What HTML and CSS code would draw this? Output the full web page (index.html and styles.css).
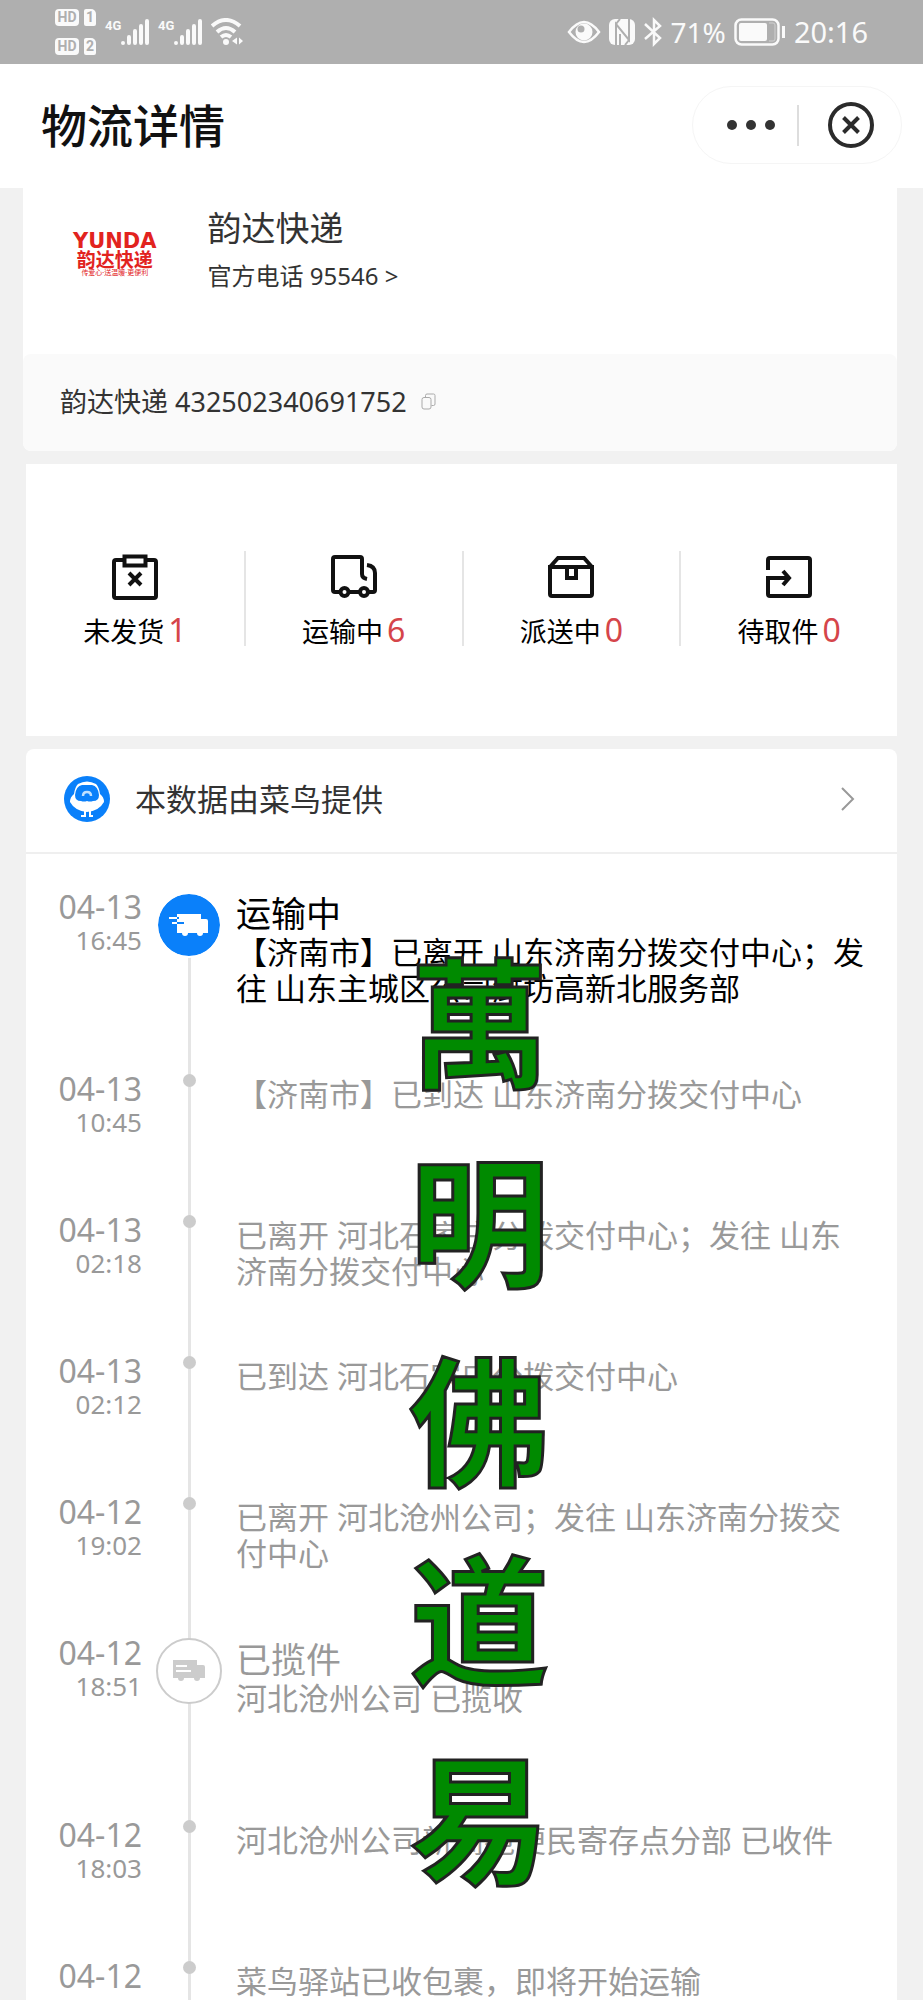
FILE: index.html
```html
<!DOCTYPE html>
<html lang="zh-CN">
<head>
    <meta charset="UTF-8">
    <meta name="viewport" content="width=device-width, initial-scale=1.0">
    <title>物流详情</title>
    <link rel="stylesheet" href="styles.css">
</head>
<body>
    <div class="status-bar">
        <div class="status-left">
            <div class="sim-list">
                <div class="sim"><span class="hd">HD</span><span class="sim-no">1</span></div>
                <div class="sim"><span class="hd">HD</span><span class="sim-no">2</span></div>
            </div>
            <div class="signal">
                <span class="net">4G</span>
                <svg width="28" height="26" viewBox="0 0 28 26"><path d="M2 24v0M8 18v6M14 12v12M20 7v17M26 2v22" stroke="#fafafa" stroke-width="4" stroke-linecap="round"/></svg>
            </div>
            <div class="signal">
                <span class="net">4G</span>
                <svg width="28" height="26" viewBox="0 0 28 26"><path d="M2 24v0M8 18v6M14 12v12M20 7v17M26 2v22" stroke="#fafafa" stroke-width="4" stroke-linecap="round"/></svg>
            </div>
            <svg width="33" height="28" viewBox="0 0 33 28" fill="none" stroke="#fafafa" stroke-width="4">
                <path d="M1 8q14-12 28 0M6 14q9-8 18 0M10 19q5-4 10 0"/>
                <circle cx="15" cy="24" r="3" fill="#fafafa" stroke="none"/>
                <path d="M26 19.500v7l-5-3.500zM28 19.500v7l4-3.500z" fill="#fafafa" stroke="none"/>
            </svg>
        </div>
        <div class="status-right">
            <svg width="34" height="24" viewBox="0 0 34 24">
                <path d="M2 12Q17-8 32 12Q17 32 2 12z" fill="none" stroke="#fafafa" stroke-width="2.500"/>
                <circle cx="17" cy="12" r="8.500" fill="#fafafa"/>
                <circle cx="14" cy="9" r="3.500" fill="#afafaf"/>
            </svg>
            <svg width="26" height="26" viewBox="0 0 26 26">
                <rect width="26" height="26" rx="6" fill="#fafafa"/>
                <path d="M7 26V5l13 16V0" fill="none" stroke="#afafaf" stroke-width="2"/>
                <path d="M7 5l4-5M20 21l-4 5M11 26V15" fill="none" stroke="#afafaf" stroke-width="2"/>
            </svg>
            <svg width="20" height="30" viewBox="0 0 20 30" fill="none" stroke="#fafafa" stroke-width="2.500"><path d="M2 7l15 14-6 6V3l6 6L2 22"/></svg>
            <span>71%</span>
            <svg width="52" height="28" viewBox="0 0 52 28">
                <rect x="1.500" y="1.500" width="43" height="25" rx="6" fill="none" stroke="#fafafa" stroke-width="2.500"/>
                <rect x="5" y="5" width="28" height="18" rx="2" fill="#fafafa"/>
                <path d="M35 5h4q2 0 2 2v14q0 2-2 2h-4" fill="none" stroke="#d0d0d0"/>
                <path d="M49.500 8v12" stroke="#fafafa" stroke-width="3"/>
            </svg>
            <span class="clock">20:16</span>
        </div>
    </div>

    <header class="title-bar">
        <h1>物流详情</h1>
        <div class="capsule">
            <button type="button" aria-label="更多">
                <svg width="50" height="12" viewBox="0 0 50 12" fill="#333"><circle cx="6" cy="6" r="5"/><circle cx="25" cy="6" r="5"/><circle cx="44" cy="6" r="5"/></svg>
            </button>
            <span class="capsule-line"></span>
            <button type="button" aria-label="关闭">
                <svg width="46" height="46" viewBox="0 0 46 46" fill="none" stroke="#2b2b2b" stroke-width="4"><circle cx="23" cy="23" r="21"/><path d="M15.500 15.500l15 15M30.500 15.500l-15 15"/></svg>
            </button>
        </div>
    </header>

    <main>
        <section class="carrier">
            <div class="carrier-info">
                <div class="logo">
                    <span class="logo-en">YUNDA</span>
                    <span class="logo-cn">韵达快递</span>
                    <span class="logo-tip">传爱心·送温暖·更便利</span>
                </div>
                <div>
                    <h2>韵达快递</h2>
                    <a href="tel:95546">官方电话 95546 &gt;</a>
                </div>
            </div>
            <div class="waybill">
                <span>韵达快递 432502340691752</span>
                <button type="button" aria-label="复制">
                    <svg width="15" height="17" viewBox="0 0 15 17" fill="none" stroke="#aaa"><rect x="1" y="4.500" width="9" height="11.500" rx="2"/><path d="M4.500 4.500v-2q0-1.500 1.500-1.500h6.500q1.500 0 1.500 1.500v8.500q0 1.500-1.500 1.500h-2"/></svg>
                </button>
            </div>
        </section>

        <ul class="stats">
            <li>
                <svg viewBox="0 0 46 46"><path d="M12 6H4q-2 0-2 2v34q0 2 2 2h38q2 0 2-2V8q0-2-2-2h-8"/><path d="M12.500 2.500h21v9h-21zM17 19l12 12M29 19l-12 12"/></svg>
                <p>未发货<b>1</b></p>
            </li>
            <li>
                <svg viewBox="0 0 46 46"><path d="M9 38H4q-2 0-2-2V5q0-2 2-2h25q2 0 2 2v15q0 4 5 5"/><path d="M36 11q8 1 8 8v17q0 2-2 2h-4M18 38h11"/><circle cx="13.500" cy="38" r="4"/><circle cx="33" cy="38" r="4"/></svg>
                <p>运输中<b>6</b></p>
            </li>
            <li>
                <svg viewBox="0 0 46 46"><path d="M2 13h42v27q0 2-2 2H4q-2 0-2-2zM2 13l8-9h26l8 9M19 14v10h9V14"/></svg>
                <p>派送中<b>0</b></p>
            </li>
            <li>
                <svg viewBox="0 0 46 46"><path d="M2 16V6q0-2 2-2h38q2 0 2 2v34q0 2-2 2H4q-2 0-2-2V24h20M17 17l6 7-6 7"/></svg>
                <p>待取件<b>0</b></p>
            </li>
        </ul>

        <section class="tracking">
            <a class="provider" href="#">
                <svg width="46" height="46" viewBox="0 0 46 46">
                    <circle cx="23" cy="23" r="23" fill="#0a80fa"/>
                    <path d="M14 8q9-5 18 0 3 3 4 10 4 3 4 8-5 9-17 10-12-1-17-10 0-5 4-8Q11 11 14 8z" fill="#fff"/>
                    <path d="M18 9h10q6 1 7 10 0 6-6 6-3 1-6 0-3 1-6 0-6 0-6-6 1-9 7-10z" fill="#0a80fa"/>
                    <path d="M19 20q0-4 4-4t4 4" fill="none" stroke="#bfe0ff" stroke-width="2.500"/>
                    <path d="M21 35v5h-4M26 35v5h3" fill="none" stroke="#fff" stroke-width="2"/>
                </svg>
                <span>本数据由菜鸟提供</span>
                <svg class="arrow" width="14" height="24" viewBox="0 0 14 24"><path d="M1 1l11 11L1 23" fill="none" stroke="#999" stroke-width="2"/></svg>
            </a>

            <ol class="timeline">
                <li class="stage current">
                    <time>04-13<small>16:45</small></time>
                    <span class="axis"><span class="node">
                        <svg width="40" height="22" viewBox="0 0 40 22"><path d="M8 0h24v5h5q2 0 2 2v12h-5a3 3 0 0 1-6 0H19a3 3 0 0 1-6 0H8zM0 3h8v2H0zM3 8h6v2H3z" fill="#fff"/><path d="M8 4h2M8 9h7" stroke="#0a80fa" stroke-width="2"/></svg>
                    </span></span>
                    <div class="event">
                        <h3>运输中</h3>
                        <p>【济南市】已离开 山东济南分拨交付中心；发往 山东主城区公司潍坊高新北服务部</p>
                    </div>
                </li>
                <li>
                    <time>04-13<small>10:45</small></time>
                    <span class="axis"><span class="dot"></span></span>
                    <div class="event"><p>【济南市】已到达 山东济南分拨交付中心</p></div>
                </li>
                <li>
                    <time>04-13<small>02:18</small></time>
                    <span class="axis"><span class="dot"></span></span>
                    <div class="event"><p>已离开 河北石家庄分拨交付中心；发往 山东济南分拨交付中心</p></div>
                </li>
                <li>
                    <time>04-13<small>02:12</small></time>
                    <span class="axis"><span class="dot"></span></span>
                    <div class="event"><p>已到达 河北石家庄分拨交付中心</p></div>
                </li>
                <li>
                    <time>04-12<small>19:02</small></time>
                    <span class="axis"><span class="dot"></span></span>
                    <div class="event"><p>已离开 河北沧州公司；发往 山东济南分拨交付中心</p></div>
                </li>
                <li class="stage">
                    <time>04-12<small>18:51</small></time>
                    <span class="axis"><span class="node">
                        <svg width="32" height="22" viewBox="0 0 32 22"><path d="M0 0h24v5h6q2 0 2 2v11h-5a3 3 0 0 1-6 0H11a3 3 0 0 1-6 0H0z" fill="#ccc"/><path d="M3 6h11M3 11h15" stroke="#fff" stroke-width="2"/></svg>
                    </span></span>
                    <div class="event">
                        <h3>已揽件</h3>
                        <p>河北沧州公司 已揽收</p>
                    </div>
                </li>
                <li>
                    <time>04-12<small>18:03</small></time>
                    <span class="axis"><span class="dot"></span></span>
                    <div class="event"><p>河北沧州公司新高苑便民寄存点分部 已收件</p></div>
                </li>
                <li>
                    <time>04-12<small>18:44</small></time>
                    <span class="axis"><span class="dot"></span></span>
                    <div class="event"><p>菜鸟驿站已收包裹，即将开始运输</p></div>
                </li>
            </ol>

            <div class="watermark">
                <span>萬</span><span>明</span><span>佛</span><span>道</span><span>易</span>
            </div>
        </section>
    </main>
</body>
</html>
```

FILE: styles.css
```css
* {
    box-sizing: border-box;
    margin: 0;
    padding: 0;
}
body {
    display: flex;
    flex-direction: column;
    height: 100vh;
    overflow: hidden;
    background: #f1f1f1;
    color: #333;
    font-family: "Noto Sans", "Noto Sans CJK SC", sans-serif;
}
h1, h2, h3, b {
    font-weight: normal;
}
ul, ol {
    list-style: none;
}
a {
    color: inherit;
    text-decoration: none;
}
button {
    display: flex;
    border: none;
    background: none;
    cursor: pointer;
}
svg {
    flex-shrink: 0;
}

/* phone status bar */
.status-bar {
    flex-shrink: 0;
    display: flex;
    justify-content: space-between;
    align-items: center;
    height: 64px;
    padding: 0 55px;
    background: #afafaf;
    color: #fafafa;
    font-size: 28px;
    line-height: 36px;
}
.status-left,
.status-right,
.signal {
    display: flex;
    align-items: center;
}
.status-left {
    gap: 9px;
}
.sim-list {
    display: grid;
    gap: 12px;
}
.sim {
    display: flex;
    gap: 5px;
    font-family: Roboto, sans-serif;
    font-size: 14px;
    font-weight: bold;
    line-height: 17px;
    text-align: center;
    color: #afafaf;
}
.hd {
    width: 24px;
    border-radius: 4px;
    background: #fafafa;
}
.sim-no {
    width: 12px;
    border-radius: 2px 5px 2px 2px;
    background: #fafafa;
}
.net {
    align-self: flex-start;
    width: 16px;
    font-family: Roboto, sans-serif;
    font-size: 13px;
    font-weight: bold;
    line-height: 14px;
}
.status-right {
    gap: 8px;
}
.clock {
    font-size: 29px;
}

/* title bar */
.title-bar {
    flex-shrink: 0;
    display: flex;
    justify-content: space-between;
    align-items: center;
    height: 124px;
    padding: 0 21px 2px 41px;
    background: #fff;
}
h1 {
    font-size: 46px;
    font-weight: 500;
    line-height: 60px;
    color: #111;
}
.capsule {
    display: flex;
    align-items: center;
    justify-content: space-between;
    width: 210px;
    height: 78px;
    padding: 0 27px 0 33px;
    border: 1px solid #f5f5f5;
    border-radius: 39px;
}
.capsule-line {
    width: 2px;
    height: 41px;
    margin-right: 8px;
    background: #ddd;
}

main {
    flex: 1;
    min-height: 0;
    overflow: hidden;
    padding: 0 26px;
}

/* carrier card */
.carrier {
    margin: 0 0 13px -3px;
    border-radius: 0 0 8px 8px;
    background: #fff;
    overflow: hidden;
}
.carrier-info {
    display: flex;
    gap: 51px;
    height: 166px;
    padding: 18px 50px;
}
.logo {
    display: flex;
    flex-direction: column;
    align-items: center;
    padding-top: 24px;
    color: #e2231e;
    white-space: nowrap;
}
.logo-en {
    font-family: "DejaVu Sans", sans-serif;
    font-size: 21px;
    font-weight: bold;
    line-height: 22px;
}
.logo-cn {
    font-size: 19px;
    font-weight: bold;
    line-height: 16px;
}
.logo-tip {
    font-size: 7px;
    line-height: 10px;
}
h2 {
    font-size: 34px;
    line-height: 44px;
}
.carrier-info a {
    display: block;
    margin-top: 10px;
    font-size: 24px;
    line-height: 32px;
}
.waybill {
    display: flex;
    align-items: center;
    gap: 14px;
    height: 97px;
    padding: 0 37px 2px;
    border-radius: 8px;
    background: #fafafa;
    font-size: 27px;
    line-height: 36px;
}

/* package counters */
.stats {
    display: grid;
    grid-template-columns: repeat(4, 1fr);
    margin-bottom: 13px;
    padding: 87px 0 90px;
    background: #fff;
}
.stats li {
    display: flex;
    flex-direction: column;
    align-items: center;
    height: 95px;
}
.stats li + li {
    border-left: 2px solid #e5e5e5;
}
.stats svg {
    width: 46px;
    height: 46px;
    margin-top: 3px;
    fill: none;
    stroke: #111;
    stroke-width: 4;
}
.stats p {
    display: flex;
    align-items: baseline;
    gap: 4px;
    margin-top: 10px;
    font-size: 27px;
    line-height: 40px;
    color: #000;
}
.stats b {
    font-size: 32px;
    color: #d5454a;
}

/* tracking card */
.tracking {
    position: relative;
    border-radius: 8px 8px 0 0;
    background: #fff;
}
.provider {
    display: flex;
    align-items: center;
    height: 105px;
    padding: 0 42px 4px 38px;
    border-bottom: 2px solid #efefef;
    font-size: 31px;
    line-height: 40px;
}
.provider span {
    margin-left: 25px;
}
.arrow {
    margin-left: auto;
}
.timeline {
    padding-top: 35px;
    color: #999;
}
.timeline li {
    display: grid;
    grid-template-columns: 116px 94px 1fr;
    min-height: 141px;
    padding-right: 29px;
}
.timeline .stage {
    min-height: 182px;
}
time {
    font-size: 32px;
    line-height: 36px;
    text-align: right;
}
time small {
    display: block;
    font-size: 26px;
    line-height: 30px;
}
.axis {
    display: flex;
    justify-content: center;
    align-items: flex-start;
    background: linear-gradient(#e5e5e5, #e5e5e5) center / 3px 100% no-repeat;
}
.current .axis {
    background-position: center 40px;
}
.dot {
    width: 13px;
    height: 13px;
    margin-top: 3px;
    border-radius: 50%;
    background: #ccc;
}
.node {
    display: flex;
    align-items: center;
    justify-content: center;
    width: 66px;
    height: 66px;
    margin-top: 3px;
    border: 2px solid #ccc;
    border-radius: 50%;
    background: #fff;
}
.current .node {
    border-color: #fff;
    background: #0a80fa;
    background-clip: padding-box;
}
.event {
    padding-top: 5px;
    font-size: 31px;
    line-height: 36px;
}
.event h3 {
    font-size: 35px;
    line-height: 40px;
}
.current .event {
    color: #000;
}

/* green characters over the list */
.watermark {
    position: absolute;
    top: 168px;
    left: 0;
    right: 0;
    display: flex;
    flex-direction: column;
    align-items: center;
    padding-left: 36px;
    font-family: "Noto Sans CJK TC", sans-serif;
    font-size: 140px;
    font-weight: bold;
    line-height: 199px;
    color: #008a00;
    -webkit-text-stroke: 3px #222;
    pointer-events: none;
}
```
